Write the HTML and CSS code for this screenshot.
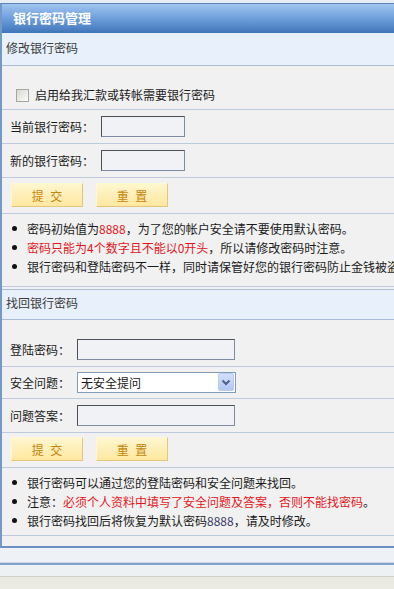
FILE: index.html
```html
<!DOCTYPE html>
<html lang="zh-CN">
<head>
    <meta charset="UTF-8">
    <title>银行密码管理</title>
    <link rel="stylesheet" href="styles.css">
</head>
<body>

    <div class="topbar"></div>

    <!-- Main panel -->
    <div class="panel">
        <div class="panel-title">银行密码管理</div>

        <!-- Change bank password -->
        <div class="section">
            <div class="section-head">修改银行密码</div>
            <div class="row row-check">
                <label><input type="checkbox" class="chk">启用给我汇款或转帐需要银行密码</label>
            </div>
            <div class="row">
                <span class="label">当前银行密码：</span>
                <input type="password" class="field field-short">
            </div>
            <div class="row">
                <span class="label">新的银行密码：</span>
                <input type="password" class="field field-short">
            </div>
            <div class="row row-btns">
                <button class="btn">提 交</button>
                <button class="btn">重 置</button>
            </div>
            <ul class="notes notes-first">
                <li>密码初始值为<span class="red">8888</span>，为了您的帐户安全请不要使用默认密码。</li>
                <li><span class="red">密码只能为4个数字且不能以0开头</span>，所以请修改密码时注意。</li>
                <li>银行密码和登陆密码不一样，同时请保管好您的银行密码防止金钱被盗。</li>
            </ul>
        </div>

        <!-- Recover bank password -->
        <div class="section section-find">
            <div class="section-head">找回银行密码</div>
            <div class="row row-first">
                <span class="label">登陆密码：</span>
                <input type="password" class="field field-long">
            </div>
            <div class="row row-select">
                <span class="label">安全问题：</span>
                <span class="select-wrap">
                    <select class="select">
                        <option>无安全提问</option>
                    </select>
                    <svg class="select-arrow" width="16" height="18" viewBox="0 0 16 18">
                        <defs>
                            <linearGradient id="arrowBg" x1="0" y1="0" x2="0" y2="1">
                                <stop offset="0" stop-color="#d3e0fb"/>
                                <stop offset="1" stop-color="#b1c6f3"/>
                            </linearGradient>
                        </defs>
                        <rect x="0.5" y="0.5" width="15" height="17" rx="1.5" fill="url(#arrowBg)" stroke="#b9cbef"/>
                        <polyline points="4.5,7.5 8,11 11.5,7.5" fill="none" stroke="#4d6185" stroke-width="2"/>
                    </svg>
                </span>
            </div>
            <div class="row">
                <span class="label">问题答案：</span>
                <input type="text" class="field field-long">
            </div>
            <div class="row row-btns">
                <button class="btn">提 交</button>
                <button class="btn">重 置</button>
            </div>
            <ul class="notes">
                <li>银行密码可以通过您的登陆密码和安全问题来找回。</li>
                <li>注意：<span class="red">必须个人资料中填写了安全问题及答案，否则不能找密码</span>。</li>
                <li>银行密码找回后将恢复为默认密码<span class="num">8888</span>，请及时修改。</li>
            </ul>
        </div>
    </div>

    <!-- Bottom frame -->
    <div class="frame-gap"></div>
    <div class="frame-band"></div>
    <div class="statusbar"></div>

</body>
</html>
```

FILE: styles.css
```css
/* Basic Styles */
body {
    margin: 0;
    padding: 0;
    overflow: hidden;
    background-color: #eef1f4;
    font-family: "Noto Sans CJK SC", "Liberation Sans", sans-serif;
    font-size: 12px;
    color: #1a1a1a;
}

.topbar {
    height: 3px;
    background-color: #e7edf5;
}

/* Panel */
.panel {
    width: 440px;
    border-top: 1px solid #5d82b1;
    border-left: 2px solid #7399c8;
    border-bottom: 2px solid #6b91c2;
    background-color: #f1f1f1;
    padding-bottom: 10px;
}

.panel-title {
    height: 29px;
    line-height: 28px;
    padding-left: 11px;
    font-size: 13px;
    font-weight: bold;
    color: #fff;
    background: linear-gradient(#a0c5f0, #6e9fdb 50%, #3f75b9);
}

/* Sections */
.section-head {
    height: 32px;
    line-height: 30px;
    padding-left: 4px;
    background-color: #e8f1fb;
    border-bottom: 1px solid #a9bdd6;
    color: #3a3a3a;
}

.section-find {
    margin-top: 2px;
}

.section-find .section-head {
    height: 29px;
    line-height: 25px;
    border-top: 1px solid #a9bdd6;
}

.row {
    display: flex;
    align-items: center;
    padding: 6px 0 6px 8px;
    border-bottom: 1px solid #bccbdd;
}

.row-check {
    padding: 22px 0 7px 14px;
    line-height: 14px;
}

.row-check label {
    display: flex;
    align-items: center;
}

.row-first {
    padding-top: 19px;
}

.row-select {
    padding: 5px 0 5px 8px;
}

.row-btns {
    gap: 13px;
    padding: 5px 0 6px 9px;
}

.section-find .row-btns {
    padding: 4px 0 6px 9px;
}

.label {
    margin-right: 7px;
}

/* Form controls */
.chk {
    appearance: none;
    width: 13px;
    height: 13px;
    margin: 0 6px 0 0;
    border: 1px solid #a5a5a2;
    background: linear-gradient(135deg, #d9d9d2, #fbfbf8);
}

.field {
    box-sizing: border-box;
    height: 21px;
    margin: 0;
    border: 1px solid #7d8ca2;
    border-top-color: #4b5058;
    border-left-color: #4b5058;
    background-color: #f0f2f5;
}

.field-short {
    width: 84px;
}

.field-long {
    width: 158px;
}

.select-wrap {
    position: relative;
    display: inline-block;
    height: 21px;
}

.select {
    appearance: none;
    box-sizing: border-box;
    width: 159px;
    height: 21px;
    margin: 0;
    padding: 0 0 0 3px;
    border: 1px solid #7f9db9;
    background-color: #fff;
    font-family: inherit;
    font-size: 12px;
    color: #1a1a1a;
}

.select-arrow {
    position: absolute;
    top: 1px;
    right: 2px;
    pointer-events: none;
}

.btn {
    box-sizing: border-box;
    width: 72px;
    height: 24px;
    margin: 0;
    padding: 0;
    border: 1px solid;
    border-color: #fff8d6 #e4c679 #e4c679 #fff8d6;
    background: linear-gradient(#fff7cf, #fee7a0);
    color: #c4860c;
    font-family: inherit;
    font-size: 12px;
    word-spacing: 4px;
    cursor: pointer;
}

/* Notes */
.notes {
    list-style: none;
    margin: 0;
    padding: 5px 0 5px;
    border-bottom: 1px solid #bccbdd;
}

.notes-first {
    padding-bottom: 10px;
}

.notes li {
    display: flex;
    align-items: center;
    height: 19px;
    white-space: nowrap;
}

.notes li::before {
    content: "";
    flex: none;
    width: 5px;
    height: 5px;
    margin: 0 10px 0 10px;
    border-radius: 50%;
    background-color: #111;
}

.red {
    color: #e2171c;
}

.num {
    color: #3b3b63;
}

/* Bottom frame */
.frame-gap {
    height: 14px;
    background-color: #eef1f5;
    border-bottom: 1px solid #cdd8e5;
}

.frame-band {
    height: 11px;
    border-top: 2px solid #7fa1cb;
    background-color: #eef1f4;
}

.statusbar {
    height: 20px;
    border-top: 1px solid #d3d1c6;
    background-color: #ecebe3;
}
```
